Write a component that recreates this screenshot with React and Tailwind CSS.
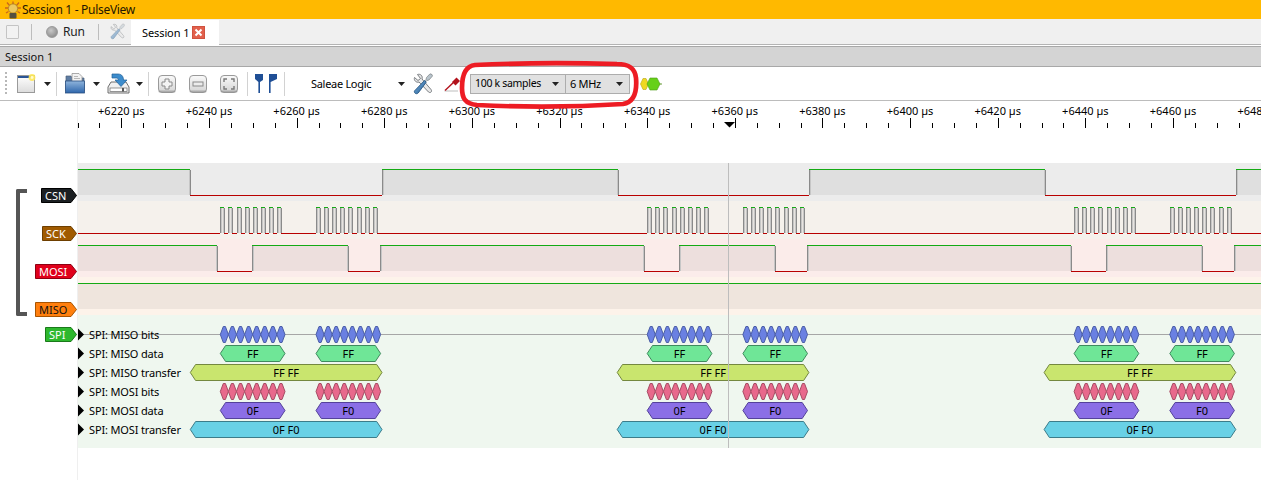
import React from "react";

const X0 = 121.3, STEP = 87.64;
const majors = Array.from({ length: 15 }, (_, i) => i);
const ticks = Array.from({ length: 56 }, (_, i) => 77.5 + i * (STEP / 4));

function Ruler() {
  return (
    <svg width="1183" height="62" viewBox="78 101 1183 62" className="block shrink-0">
      {majors.map((i) => (
        <text key={i} x={X0 + i * STEP} y="115" textAnchor="middle" fill="#000" className="text-[11px]">
          {`+${6220 + i * 20} µs`}
        </text>
      ))}
      {ticks.map((x, i) => {
        const major = i % 4 === 2;
        const px = Math.round(x) + 0.5;
        return <line key={i} x1={px} x2={px} y1={major ? 118 : 123} y2="128" stroke="#000" strokeWidth="1" shapeRendering="crispEdges" />;
      })}
      <polygon points="724,122 735,122 729.5,127.5" fill="#000" />
    </svg>
  );
}

function Signal({ edges, startHigh, hi, lo }) {
  const pts = [78, ...edges, 1261];
  const out = [];
  let high = startHigh;
  for (let i = 0; i < pts.length - 1; i++) {
    const a = Math.round(pts[i]), b = Math.round(pts[i + 1]);
    if (high) {
      out.push(<rect key={`f${i}`} x={a} y={hi} width={b - a} height={lo - hi} fill="rgba(0,0,0,0.055)" />);
    }
    if (i > 0) {
      out.push(<rect key={`t${i}`} x={a} y={hi + 1} width="1" height={lo - hi - 1} fill="#8a8a8a" />);
      out.push(<rect key={`u${i}`} x={high ? a + 1 : a - 1} y={hi + 1} width="1" height={lo - hi - 1} fill="#c6c6c6" />);
    }
    if (high) {
      out.push(<rect key={`l${i}`} x={a} y={hi} width={b - a} height="1" fill="#14aa14" />);
    } else {
      out.push(<rect key={`l${i}`} x={a} y={lo} width={b - a} height="1" fill="#b80000" />);
    }
    high = !high;
  }
  return <g shapeRendering="crispEdges">{out}</g>;
}

function Hex({ a, b, y, tip = 5.3, fill, stroke, label }) {
  const t = y - 8, u = y + 8;
  return (
    <g>
      <polygon points={`${a},${y} ${a + tip},${t} ${b - tip},${t} ${b},${y} ${b - tip},${u} ${a + tip},${u}`} fill={fill} stroke={stroke} strokeWidth="1" />
      {label && (
        <text x={(a + b) / 2} y={y + 4} textAnchor="middle" fill="#000" className="text-[11px]">
          {label}
        </text>
      )}
    </g>
  );
}

const PERIOD = 426.9;
const offs = [0, PERIOD, PERIOD * 2];
const bursts = [[220.3, 285], [316, 380.6]];

function Bits({ y, fill, stroke }) {
  return offs.flatMap((o, k) =>
    bursts.flatMap(([a, b], j) =>
      Array.from({ length: 8 }, (_, i) => {
        const w = (b - a) / 8;
        return <Hex key={`${k}${j}${i}`} a={a + o + i * w} b={a + o + (i + 1) * w} y={y} tip={3} fill={fill} stroke={stroke} />;
      })
    )
  );
}

function Words({ y, fill, stroke, labels }) {
  return offs.flatMap((o, k) =>
    bursts.map(([a, b], j) => <Hex key={`${k}${j}`} a={a + o} b={b + o} y={y} fill={fill} stroke={stroke} label={labels[j]} />)
  );
}

function Transfers({ y, fill, stroke, label }) {
  return offs.map((o, k) => <Hex key={k} a={190.3 + o} b={382 + o} y={y} fill={fill} stroke={stroke} label={label} />);
}

const rows = ["SPI: MISO bits", "SPI: MISO data", "SPI: MISO transfer", "SPI: MOSI bits", "SPI: MOSI data", "SPI: MOSI transfer"];
const rowY = [334.5, 353.5, 372.5, 391.5, 410.5, 429.5];

function Traces() {
  const csn = [190.3, 382, 617.5, 808.5, 1044.5, 1236];
  const mosi = [216.5, 251.5, 347.5, 379.5, 643.5, 679, 774.5, 806.5, 1070.5, 1106, 1201.5, 1233.5];
  const sck = [];
  offs.forEach((o) => {
    [220.3, 316].forEach((s) => {
      for (let i = 0; i < 8; i++) {
        sck.push(s + o + i * 8.12, s + o + i * 8.12 + 4);
      }
    });
  });
  return (
    <svg width="1183" height="285" viewBox="78 163 1183 285" className="block shrink-0">
      <g shapeRendering="crispEdges">
        <rect x="78" y="163" width="1183" height="38" fill="#ececec" />
        <rect x="78" y="201" width="1183" height="38" fill="#f5f1ec" />
        <rect x="78" y="239" width="1183" height="38" fill="#fbecea" />
        <rect x="78" y="277" width="1183" height="38" fill="#fdf3ea" />
        <rect x="78" y="315" width="1183" height="133" fill="#eff7ef" />
      </g>
      <Signal edges={csn} startHigh hi={169} lo={195} />
      <Signal edges={sck} startHigh={false} hi={207} lo={233} />
      <Signal edges={mosi} startHigh hi={245} lo={271} />
      <Signal edges={[]} startHigh hi={283} lo={309} />
      <rect x="78" y="334" width="1183" height="1" fill="#a6a6a6" shapeRendering="crispEdges" />
      {rows.map((r, i) => (
        <g key={r}>
          <polygon points={`78,${rowY[i] - 6} 84,${rowY[i]} 78,${rowY[i] + 6}`} fill="#000" />
          <text x="89" y={rowY[i] + 4} fill="#000" className="text-[11px] tracking-[-0.15px]">{r}</text>
        </g>
      ))}
      <Bits y={rowY[0]} fill="#6a80e2" stroke="#4a5da6" />
      <Words y={rowY[1]} fill="#6fe697" stroke="#3f8a5e" labels={["FF", "FF"]} />
      <Transfers y={rowY[2]} fill="#c9e56e" stroke="#74883f" label="FF FF" />
      <Bits y={rowY[3]} fill="#e8698c" stroke="#a64b63" />
      <Words y={rowY[4]} fill="#8b6fe6" stroke="#54429a" labels={["0F", "F0"]} />
      <Transfers y={rowY[5]} fill="#69d1e6" stroke="#3c7c8a" label="0F F0" />
      <rect x="728" y="163" width="1" height="285" fill="#bdbdbd" shapeRendering="crispEdges" />
    </svg>
  );
}

function Tag({ w, fill, stroke, color, children }) {
  const b = w - 6;
  return (
    <svg width={w} height="15" viewBox={`0 0 ${w} 15`} className="block">
      <polygon points={`0.5,0.5 ${b},0.5 ${w - 0.5},7.5 ${b},14.5 0.5,14.5`} fill={fill} stroke={stroke} />
      <text x="4" y="11.5" fill={color} className="text-[11px]">{children}</text>
    </svg>
  );
}

function WrenchIcon({ id, className }) {
  return (
    <svg viewBox="0 0 20 22" className={className}>
      <defs>
        <linearGradient id={id} x1="0" y1="0" x2="1" y2="1">
          <stop offset="0" stopColor="#7fb0dc" />
          <stop offset="1" stopColor="#1f5c94" />
        </linearGradient>
      </defs>
      <path d="M1.5 4.5 L5 7.5 L7.5 5.5 L4.5 1.5 C7.5 0.5 10 3 9 6 L18 16.5 C19.5 18.5 17.5 20.5 15.5 19 L6 9 C3.5 10 0.5 7.5 1.5 4.5 Z" fill="#e8e8e8" stroke="#6d7276" strokeWidth="0.9" />
      <path d="M19 1.5 L17 0.8 L13.5 4.5 L13 6.5 L11.5 8 L12.5 9 L14 7.5 L16 7 L19.5 3 Z" fill="#b8c4cc" stroke="#6d7276" strokeWidth="0.6" />
      <path d="M11.5 7.5 L13.2 9.2 L5.2 20 C3.8 21.6 0.8 20.4 1.4 18 Z" fill={`url(#${id})`} stroke="#1d4f7e" strokeWidth="0.8" />
    </svg>
  );
}

function Drop() {
  return (
    <svg viewBox="0 0 7 4" className="w-[7px] h-[4px] shrink-0 block">
      <polygon points="0,0 7,0 3.5,4" fill="#222" />
    </svg>
  );
}

function Sep({ className }) {
  return <div className={`w-px h-[24px] bg-[#d2d2d2] shrink-0 ${className}`} />;
}

function ZoomBtn({ children, className }) {
  return (
    <svg viewBox="0 0 18 18" className={`w-[18px] h-[18px] shrink-0 ${className}`}>
      <defs>
        <linearGradient id="zb" x1="0" y1="0" x2="0" y2="1">
          <stop offset="0" stopColor="#fafafa" />
          <stop offset="1" stopColor="#d4d4d4" />
        </linearGradient>
      </defs>
      <rect x="0.5" y="0.5" width="17" height="17" rx="3.5" fill="url(#zb)" stroke="#9a9a9a" />
      <rect x="0.5" y="15.5" width="17" height="2" rx="1" fill="#8a8a8a" opacity="0.55" />
      {children}
    </svg>
  );
}

export default function App() {
  return (
    <div className="relative w-[1261px] h-[480px] overflow-hidden bg-white flex flex-col text-black font-['Noto_Sans','DejaVu_Sans',sans-serif]">
      {/* Title bar */}
      <div className="h-[19px] shrink-0 bg-[#ffb900] flex items-center pl-[5px]">
        <svg viewBox="0 0 16 18" className="w-[16px] h-[18px] shrink-0">
          <path d="M8 0.5 V3.5 M2 1.5 L4.5 4.5 M14 1.5 L11.5 4.5 M0 7 H3 M16 7 H13 M1 12 L3.5 10.5 M15 12 L12.5 10.5" stroke="#c9661c" strokeWidth="1.3" />
          <circle cx="8" cy="7.5" r="4.6" fill="#ecc860" stroke="#a87a20" strokeWidth="0.8" />
          <rect x="4.5" y="12" width="7" height="5.5" rx="0.8" fill="#55503f" />
        </svg>
        <span className="ml-[1px] text-[12px] leading-none tracking-[-0.3px] whitespace-nowrap text-[#241600]">Session 1 - PulseView</span>
      </div>

      {/* Tab bar */}
      <div className="h-[26px] shrink-0 bg-[#f0f0f0] border-b border-[#b4b4b4] flex items-center">
        <div className="ml-[6px] w-[13px] h-[14px] bg-[#f2f2f2] border border-[#c4c4c4] rounded-[1px] shrink-0" />
        <div className="ml-[12px] w-px h-[16px] bg-[#bdbdbd] shrink-0" />
        <div className="ml-[14px] w-[12px] h-[12px] rounded-full bg-[radial-gradient(circle_at_40%_35%,#c8c8c8,#7e7e7e)] border border-[#9a9a9a] shrink-0" />
        <span className="ml-[5px] w-[30px] text-[12px] leading-none tracking-[-0.2px] shrink-0 text-[#222]">Run</span>
        <div className="ml-[5px] w-px h-[16px] bg-[#bdbdbd] shrink-0" />
        <WrenchIcon id="w1" className="ml-[11px] w-[15px] h-[17px] shrink-0 opacity-50" />
        <div className="ml-[6px] w-[88px] h-[25px] self-start mt-[1px] bg-white flex items-center shrink-0">
          <span className="ml-[11px] w-[50px] text-[11px] leading-none tracking-[-0.1px] whitespace-nowrap shrink-0">Session 1</span>
          <div className="w-[13px] h-[13px] bg-[#e2604c] border border-[#d0523f] flex items-center justify-center shrink-0">
            <svg viewBox="0 0 9 9" className="w-[9px] h-[9px]">
              <path d="M1.5 1.5 L7.5 7.5 M7.5 1.5 L1.5 7.5" stroke="#fff" strokeWidth="2" />
            </svg>
          </div>
        </div>
      </div>

      {/* Panel header */}
      <div className="h-[20px] shrink-0 bg-[#d4d4d4] border-t border-[#a8a8a8] mt-px flex items-center pl-[5px]">
        <span className="text-[11px] leading-none text-[#111]">Session 1</span>
      </div>

      {/* Toolbar */}
      <div className="h-[35px] shrink-0 bg-white border-t border-[#a8a8a8] border-b border-b-[#bcbcbc] flex items-center text-[11px]">
        <div className="ml-[5px] w-[2px] h-[24px] shrink-0 bg-[repeating-linear-gradient(to_bottom,#b8b8b8_0,#b8b8b8_2px,transparent_2px,transparent_4px)]" />
        <svg viewBox="0 0 19 19" className="ml-[10px] w-[19px] h-[19px] shrink-0">
          <defs>
            <linearGradient id="nw" x1="0" y1="0" x2="0" y2="1">
              <stop offset="0" stopColor="#ffffff" />
              <stop offset="1" stopColor="#dcdcdc" />
            </linearGradient>
          </defs>
          <rect x="0.5" y="1.5" width="17" height="17" fill="url(#nw)" stroke="#9a9a9a" />
          <rect x="1" y="2" width="14" height="2" fill="#2a5596" />
          <circle cx="15" cy="3.5" r="3.4" fill="#ffe95a" opacity="0.9" />
          <circle cx="15" cy="3.5" r="1.4" fill="#fffbd0" />
        </svg>
        <div className="ml-[8px] shrink-0"><Drop /></div>
        <Sep className="ml-[5px]" />
        <svg viewBox="0 0 20 21" className="ml-[8px] w-[20px] h-[21px] shrink-0">
          <defs>
            <linearGradient id="fd" x1="0" y1="0" x2="0" y2="1">
              <stop offset="0" stopColor="#8fb4dc" />
              <stop offset="1" stopColor="#2e66ac" />
            </linearGradient>
          </defs>
          <path d="M1 3 H6 L7 5 H19 V18 H1 Z" fill="#5f7da3" stroke="#4a5e78" strokeWidth="0.7" />
          <path d="M7 0.5 H14 L17 3.5 V9 H7 Z" fill="#f2f2f2" stroke="#8a8a8a" strokeWidth="0.7" />
          <path d="M9 3.5 H13 M9 5.5 H15" stroke="#a8a8a8" strokeWidth="0.8" />
          <rect x="0.5" y="8" width="19" height="12" fill="url(#fd)" stroke="#2a4f80" strokeWidth="0.8" />
        </svg>
        <div className="ml-[8px] shrink-0"><Drop /></div>
        <svg viewBox="0 0 23 21" className="ml-[7px] w-[23px] h-[21px] shrink-0">
          <path d="M4 9 H19 L22 14 V20 H1 V14 Z" fill="#f0f0f0" stroke="#5f5f5f" strokeWidth="0.9" />
          <rect x="3" y="15" width="17" height="3.5" fill="#fff" stroke="#6a6a6a" strokeWidth="0.7" />
          <rect x="15" y="15" width="2" height="3.5" fill="#555" />
          <path d="M5 1 H11 C15 1 16.5 4 16.5 7 H20 L14 13.5 L8 7 H11.5 C11.5 5.5 10.5 5 9 5 H5 Z" fill="#3d8ccc" stroke="#1f5f96" strokeWidth="0.7" />
        </svg>
        <div className="ml-[6px] shrink-0"><Drop /></div>
        <Sep className="ml-[5px]" />
        <ZoomBtn className="ml-[9px]">
          <path d="M7 4 H11 V7 H14 V11 H11 V14 H7 V11 H4 V7 H7 Z" fill="#f4f4f4" stroke="#8a8a8a" />
        </ZoomBtn>
        <ZoomBtn className="ml-[13px]">
          <rect x="4" y="7" width="10" height="4" fill="#ececec" stroke="#8a8a8a" />
        </ZoomBtn>
        <ZoomBtn className="ml-[13px]">
          <path d="M4 7 V4 H7 M11 4 H14 V7 M14 11 V14 H11 M7 14 H4 V11" fill="none" stroke="#7a7a7a" strokeWidth="1.4" />
        </ZoomBtn>
        <Sep className="ml-[9px]" />
        <svg viewBox="0 0 23 19" className="ml-[7px] w-[23px] h-[19px] shrink-0">
          <path d="M0 0 H8 V6 L5 8 V19 H3.4 V8 L0 5 Z" fill="#1f4f96" />
          <path d="M22 0 H14 V19 H15.6 V8 L22 5 Z" fill="#1f4f96" />
        </svg>
        <Sep className="ml-[6px]" />
        <span className="ml-[26px] w-[86px] shrink-0 leading-none tracking-[-0.3px] whitespace-nowrap">Saleae Logic</span>
        <div className="ml-[1px] shrink-0"><Drop /></div>
        <WrenchIcon id="w2" className="ml-[8px] w-[20px] h-[22px] shrink-0" />
        <svg viewBox="0 0 16 16" className="ml-[11px] w-[16px] h-[16px] shrink-0">
          <path d="M0.5 15 H14" stroke="#d6d6d6" strokeWidth="1.6" />
          <path d="M1 14.5 L11 5" stroke="#b3121c" strokeWidth="1.4" />
          <path d="M8 6 L12.5 1.5 L16 5 L11.5 9.5 Z" fill="#b3121c" />
        </svg>
        <div className="ml-[10px] w-[96px] h-[20px] shrink-0 bg-[#e1e1e1] border border-[#adadad] flex items-center justify-between pl-[4px] pr-[6px]">
          <span className="text-[10.5px] leading-none tracking-[-0.3px] whitespace-nowrap">100 k samples</span>
          <Drop />
        </div>
        <div className="w-[64px] h-[20px] shrink-0 bg-[#e1e1e1] border border-l-0 border-[#adadad] flex items-center justify-between pl-[4px] pr-[6px]">
          <span className="leading-none tracking-[-0.3px] whitespace-nowrap">6 MHz</span>
          <Drop />
        </div>
        <svg viewBox="0 0 22 14" className="ml-[10px] w-[22px] h-[14px] shrink-0">
          <path d="M19 7 H22" stroke="#6a9a3a" />
          <polygon points="0.5,7 3,1.5 6,1.5 8.5,7 6,12.5 3,12.5" fill="#f0d820" stroke="#b8a418" strokeWidth="0.6" />
          <polygon points="7,7 10,1 17,1 20,7 17,13 10,13" fill="#66d018" stroke="#4c9c14" strokeWidth="0.6" />
        </svg>
      </div>

      {/* Views */}
      <div className="relative flex-1 flex min-h-0">
        <div className="relative w-[78px] shrink-0 border-r border-[#efefef] flex flex-col items-end pt-[87px]">
          <div className="h-[15px]"><Tag w={36} fill="#1b1f22" stroke="#000" color="#fff">CSN</Tag></div>
          <div className="h-[15px] mt-[23px]"><Tag w={35} fill="#a05a00" stroke="#6e3f00" color="#fff">SCK</Tag></div>
          <div className="h-[15px] mt-[23px]"><Tag w={42} fill="#e0001b" stroke="#8f0012" color="#fff">MOSI</Tag></div>
          <div className="h-[15px] mt-[23px]"><Tag w={42} fill="#ff7f0e" stroke="#a95400" color="#111">MISO</Tag></div>
          <div className="h-[15px] mt-[10px]"><Tag w={32} fill="#2eb82e" stroke="#1a7a1a" color="#fff">SPI</Tag></div>
          <div className="absolute left-[16px] top-[88px] w-[11px] h-[127px] border-[4px] border-r-0 border-[#555] rounded-l-[2px]" />
        </div>
        <div className="flex-1 flex flex-col min-w-0">
          <Ruler />
          <Traces />
        </div>
      </div>

      {/* Hand-drawn highlight over the toolbar */}
      <svg width="186" height="52" viewBox="0 0 186 52" className="absolute left-[457px] top-[60px] pointer-events-none">
        <path d="M18 5 C60 3 120 3 160 4 C172 4 178 8 179 18 C180 30 178 42 166 44 C120 47 60 47 20 45 C8 44 5 38 5 28 C5 16 8 6 18 5 Z" fill="none" stroke="#ed1c24" strokeWidth="4.7" />
      </svg>
    </div>
  );
}
